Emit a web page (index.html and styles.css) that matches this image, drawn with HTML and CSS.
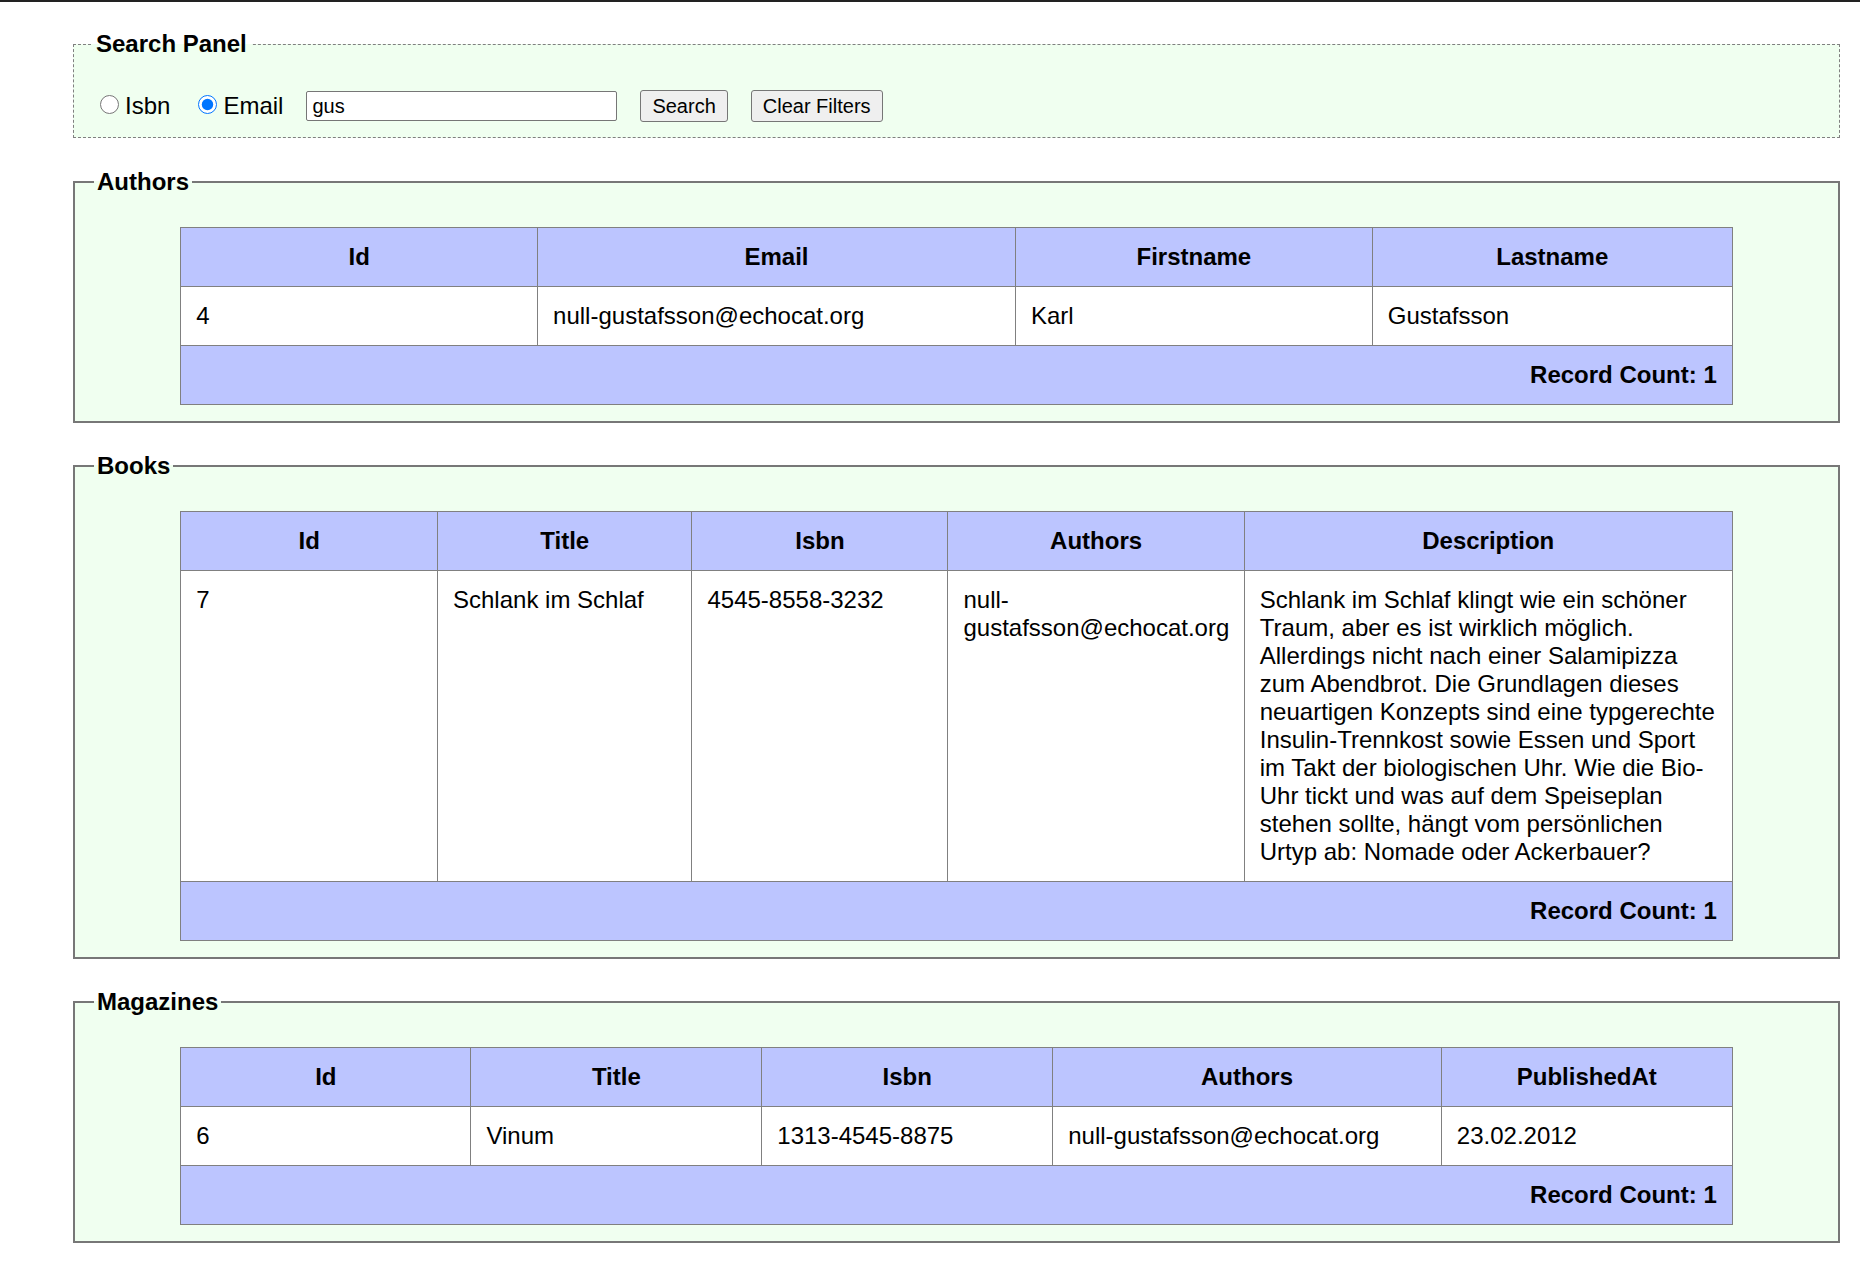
FILE: index.html
```html
<!DOCTYPE html>
<html lang="de">
<head>
<meta charset="utf-8">
<title>Search</title>
<link rel="stylesheet" href="styles.css">
</head>
<body>
<div class="topbar"></div>
<main class="page">
  <fieldset class="panel search">
    <legend>Search Panel</legend>
    <div class="search-row">
      <label class="opt opt-isbn"><input type="radio" name="field" class="radio"><span>Isbn</span></label>
      <label class="opt opt-email"><input type="radio" name="field" class="radio" checked><span>Email</span></label>
      <input type="text" class="query" value="gus">
      <button type="button" class="btn">Search</button>
      <button type="button" class="btn">Clear Filters</button>
    </div>
  </fieldset>

  <fieldset class="panel group">
    <legend>Authors</legend>
    <table class="grid">
      <colgroup>
        <col class="a1"><col class="a2"><col class="a3"><col class="a4">
      </colgroup>
      <thead>
        <tr><th>Id</th><th>Email</th><th>Firstname</th><th>Lastname</th></tr>
      </thead>
      <tbody>
        <tr><td>4</td><td>null-gustafsson@echocat.org</td><td>Karl</td><td>Gustafsson</td></tr>
      </tbody>
      <tfoot>
        <tr><td class="count" colspan="4">Record Count: 1</td></tr>
      </tfoot>
    </table>
  </fieldset>

  <fieldset class="panel group">
    <legend>Books</legend>
    <table class="grid">
      <colgroup>
        <col class="b1"><col class="b2"><col class="b3"><col class="b4"><col class="b5">
      </colgroup>
      <thead>
        <tr><th>Id</th><th>Title</th><th>Isbn</th><th>Authors</th><th>Description</th></tr>
      </thead>
      <tbody>
        <tr>
          <td>7</td>
          <td>Schlank im Schlaf</td>
          <td>4545-8558-3232</td>
          <td>null-gustafsson@echocat.org</td>
          <td>Schlank im Schlaf klingt wie ein schöner Traum, aber es ist wirklich möglich. Allerdings nicht nach einer Salamipizza zum Abendbrot. Die Grundlagen dieses neuartigen Konzepts sind eine typgerechte Insulin-Trennkost sowie Essen und Sport im Takt der biologischen Uhr. Wie die Bio-Uhr tickt und was auf dem Speiseplan stehen sollte, hängt vom persönlichen Urtyp ab: Nomade oder Ackerbauer?</td>
        </tr>
      </tbody>
      <tfoot>
        <tr><td class="count" colspan="5">Record Count: 1</td></tr>
      </tfoot>
    </table>
  </fieldset>

  <fieldset class="panel group">
    <legend>Magazines</legend>
    <table class="grid">
      <colgroup>
        <col class="m1"><col class="m2"><col class="m3"><col class="m4"><col class="m5">
      </colgroup>
      <thead>
        <tr><th>Id</th><th>Title</th><th>Isbn</th><th>Authors</th><th>PublishedAt</th></tr>
      </thead>
      <tbody>
        <tr><td>6</td><td>Vinum</td><td>1313-4545-8875</td><td>null-gustafsson@echocat.org</td><td>23.02.2012</td></tr>
      </tbody>
      <tfoot>
        <tr><td class="count" colspan="5">Record Count: 1</td></tr>
      </tfoot>
    </table>
  </fieldset>
</main>
</body>
</html>
```

FILE: styles.css
```css
html, body {
  margin: 0;
  padding: 0;
  background: #ffffff;
}

body {
  font-family: "Liberation Sans", Arial, sans-serif;
  font-size: 24px;
  line-height: 28px;
  color: #000000;
}

.topbar {
  height: 2px;
  background: #222222;
}

.page {
  display: flex;
  flex-direction: column;
  gap: 29px;
  padding: 28px 20px 40px 73px;
}

.panel {
  margin: 0;
  background: #f0fff0;
  min-width: 0;
}

.panel legend {
  padding: 0 3px;
  font-weight: bold;
  font-size: 24px;
  line-height: 28px;
}

.search {
  border: 1px dashed #808080;
  padding: 8px 19px 15px 18px;
  margin-bottom: 1px;
}

.search legend {
  padding: 0 4px;
}

.group {
  border: 2px solid #777777;
  padding: 8px 19px 16px;
}

.search-row {
  display: flex;
  align-items: center;
  margin-top: 24px;
  height: 32px;
}

.opt {
  display: inline-flex;
  align-items: center;
}

.opt-isbn {
  margin-right: 20px;
}

.opt-email {
  margin-right: 23px;
}

.radio {
  width: 19px;
  height: 19px;
  margin: -3px 6px 0 8px;
}

.query {
  box-sizing: border-box;
  width: 311px;
  height: 30px;
  margin: 0 23px 0 0;
  padding: 1px 5px;
  font-family: "Liberation Sans", Arial, sans-serif;
  font-size: 20px;
  border: 1px solid #767676;
  border-radius: 2px;
  background: #ffffff;
  color: #000000;
}

.btn {
  box-sizing: border-box;
  height: 32px;
  margin: 0 23px 0 0;
  padding: 0 11px;
  font-family: "Liberation Sans", Arial, sans-serif;
  font-size: 20px;
  color: #000000;
  background: #efefef;
  border: 1px solid #767676;
  border-radius: 3px;
}

.grid {
  width: 90%;
  margin: 23px auto 0;
  border-collapse: collapse;
  table-layout: fixed;
}

.grid th,
.grid td {
  padding: 15px;
  border: 1px solid #808080;
  vertical-align: top;
}

.grid th {
  background: #bcc5ff;
  font-weight: bold;
  text-align: center;
}

.grid td {
  background: #ffffff;
  text-align: left;
}

.grid td.count {
  background: #bcc5ff;
  font-weight: bold;
  text-align: right;
}

.a1 { width: 23%; }
.a2 { width: 30.8%; }
.a3 { width: 23%; }
.a4 { width: 23.2%; }

.b1 { width: 16.55%; }
.b2 { width: 16.4%; }
.b3 { width: 16.5%; }
.b4 { width: 19.1%; }
.b5 { width: 31.45%; }

.m1 { width: 18.7%; }
.m2 { width: 18.75%; }
.m3 { width: 18.75%; }
.m4 { width: 25.05%; }
.m5 { width: 18.75%; }
```
